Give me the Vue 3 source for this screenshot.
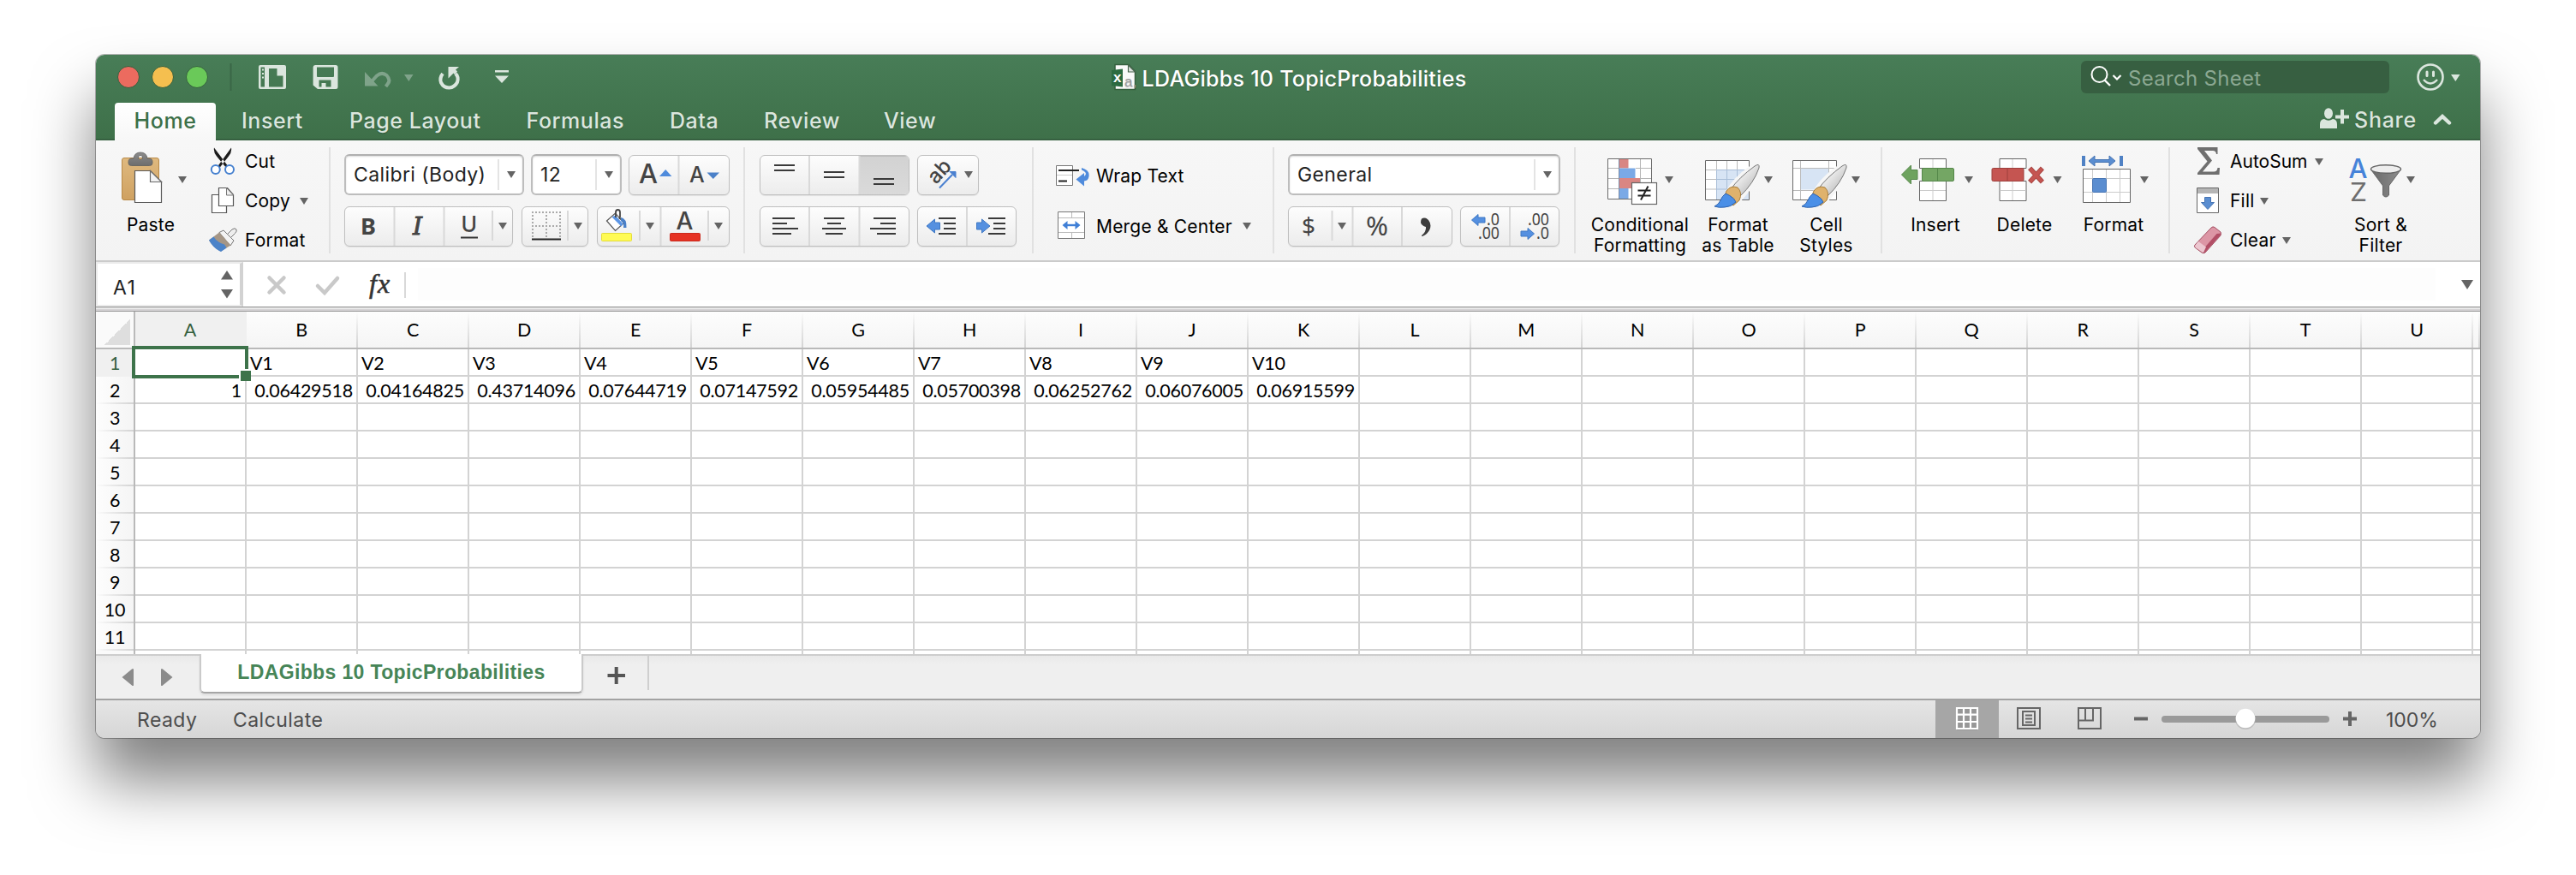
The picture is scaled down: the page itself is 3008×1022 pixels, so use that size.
<script setup>
const tabs = [
  { name: 'Insert', width: 126 },
  { name: 'Page Layout', width: 206.5 },
  { name: 'Formulas', width: 167.5 },
  { name: 'Data', width: 110 },
  { name: 'Review', width: 140 },
  { name: 'View', width: 70 },
]

const columns = 'ABCDEFGHIJKLMNOPQRSTU'.split('')

const values = [
  '1', '0.06429518', '0.04164825', '0.43714096', '0.07644719', '0.07147592',
  '0.05954485', '0.05700398', '0.06252762', '0.06076005', '0.06915599',
]

const sheet = Array.from({ length: 11 }, (_, r) => ({
  number: r + 1,
  cells: columns.map((_, c) => {
    if (r === 0 && c > 0 && c < 11) return { text: 'V' + c, numeric: false }
    if (r === 1 && c < 11) return { text: values[c], numeric: true }
    return { text: '', numeric: false }
  }),
}))
</script>

<template>
  <main class="desktop">
    <div class="window">
      <header class="chrome">
        <div class="titlebar">
          <div class="side">
            <i class="light red"></i><i class="light yellow"></i><i class="light green"></i>
            <svg class="quick" width="364" height="40" viewBox="242 70 364 40">
              <path d="M269.5 74v32" stroke="#3a6747" stroke-width="2" />
              <g fill="#dbe6de">
                <path fill-rule="evenodd" d="M304 76h28q2 0 2 2v24q0 2-2 2h-28q-2 0-2-2v-24q0-2 2-2zM304.500 78.500v23h4.500v-23zM314 80v21.500h16.500v-13h-7v-8.500z" />
                <path d="M325.500 81l5 5.500h-5zM306 80.500h2v2h-2zM306 85h2v2h-2zM306 89.500h2v2h-2z" />
                <path fill-rule="evenodd" d="M368 76h24q2.500 0 2.500 2.500v23q0 2.500-2.500 2.500h-21l-5.400-4.500v-21q0-2.500 2.400-2.500zM370 78.500v10.500q0 1 1 1h18q1 0 1-1v-10.500zM372.500 93.500v8h3v-4.500h5v4.500h6v-8z" />
              </g>
              <path d="M434.500 94.500l5.500-6q6-5 11.500-.5q5.500 6 .5 11l-1.500 2" fill="none" stroke="#7fa38a" stroke-width="4" />
              <path d="M426 84v16.500h15.500z" fill="#7fa38a" />
              <path d="M472 87h10.500l-5.200 8z" fill="#7fa38a" />
              <path d="M517 86q-4 5-2 10.500q3 6 9.500 6q6.500-.5 9.500-6.500q2-6-2-10" fill="none" stroke="#dbe6de" stroke-width="4" />
              <path d="M523.500 78h12.500l-4 3.500l2 2l-3 3.500l-1.500-1.500l-6 6z" fill="#dbe6de" />
              <path d="M578 82h16v2.500h-16zM578 88.500h16l-8 8.500z" fill="#dbe6de" />
            </svg>
          </div>
          <div class="doc-title">
            <svg width="30" height="32" viewBox="1297 74 30 32">
              <path d="M1301 75.500h16l7.500 8v21h-23.500z" fill="#fafafa" stroke="#35603f" stroke-width="1.500" />
              <path d="M1316.500 76v8h8z" fill="#dfe3e0" stroke="#49664f" stroke-width="1.200" />
              <path d="M1297 82l13-1.500v21l-13-1.500z" fill="#2c6b41" />
              <text x="1299" y="96" class="x-mark">x</text>
              <text x="1312" y="101" class="a-mark">a,</text>
            </svg>
            <span>LDAGibbs 10 TopicProbabilities</span>
          </div>
          <div class="side end">
            <div class="search">
              <svg width="46" height="38" viewBox="2436 71 46 38">
                <circle cx="2451.500" cy="87" r="9" fill="none" stroke="#fff" stroke-width="2" />
                <path d="M2457.500 93.500l6.500 6.500" stroke="#fff" stroke-width="2.400" />
                <path d="M2467.500 88l4.500 4.500l4.500-4.500" fill="none" stroke="#fff" stroke-width="2.200" />
              </svg>
              <span>Search Sheet</span>
            </div>
            <svg class="smile" width="52" height="36" viewBox="2821 72 52 36">
              <circle cx="2838" cy="90" r="14.500" fill="none" stroke="#dbe6de" stroke-width="2.600" />
              <path d="M2834 84v4.500M2841.500 84v4.500" stroke="#dbe6de" stroke-width="3" stroke-linecap="round" />
              <path d="M2830 93q8 9 16 0" fill="none" stroke="#dbe6de" stroke-width="2.400" />
              <path d="M2862 87h10.500l-5.200 8z" fill="#dbe6de" />
            </svg>
          </div>
        </div>
        <nav class="tabs">
          <div class="tab active">Home</div>
          <div v-for="t in tabs" :key="t.name" class="tab" :style="{ width: t.width + 'px' }">{{ t.name }}</div>
          <div class="share">
            <svg width="36" height="28" viewBox="2705 126 36 28">
              <ellipse cx="2716" cy="133.500" rx="5" ry="6.300" fill="#dbe6de" />
              <path d="M2706 151v-5q0-5.500 5-6q5 3.500 10 0q5 .5 5 6v5z" fill="#dbe6de" />
              <path d="M2724 137.500h16M2732 129v16.500" stroke="#dbe6de" stroke-width="4" />
            </svg>
            <span>Share</span>
            <svg class="collapse" width="22" height="14" viewBox="2841 132 22 14">
              <path d="M2844 143.500l8-7.500l8 7.500" fill="none" stroke="#dbe6de" stroke-width="4.400" stroke-linecap="round" />
            </svg>
          </div>
        </nav>
      </header>

      <section class="ribbon">
        <div class="group clipboard">
          <div class="big paste">
            <svg width="96" height="86" viewBox="128 164 96 86">
              <defs>
                <linearGradient id="tan" x1="0" y1="0" x2="0" y2="1"><stop offset="0" stop-color="#dfb97f" /><stop offset="1" stop-color="#cfa161" /></linearGradient>
                <linearGradient id="clip" x1="0" y1="0" x2="0" y2="1"><stop offset="0" stop-color="#8b8b8b" /><stop offset="1" stop-color="#6d6d6d" /></linearGradient>
              </defs>
              <rect x="142.500" y="184.500" width="43" height="49" rx="2.500" fill="url(#tan)" stroke="#b98a48" />
              <path fill-rule="evenodd" d="M156 185q1-7 8-7t8 7h1.500q4.500 0 4.500 4v1.500q0 3-3.500 3h-21q-3.500 0-3.500-3v-1.500q0-4 4.500-4zM164 181.500a2.500 2.500 0 1 0 .01 0z" fill="url(#clip)" stroke="#606060" stroke-width=".8" />
              <path d="M157.500 199.500h18l13 13v24h-31z" fill="#fff" stroke="#5a5a5a" stroke-width="1.200" />
              <path d="M175.500 199.500v13h13z" fill="#f2f2f2" stroke="#6a6a6a" stroke-width="1.200" />
              <path d="M208 206h10l-5 8z" fill="#646464" />
            </svg>
            <div>Paste</div>
          </div>
          <div class="lines">
            <div class="line">
              <svg width="45" height="46" viewBox="240 166 45 46">
                <path d="M250 172.500q-1 5 3 10l11.500 14l2-2zM270 172.500q1 5-3 10l-11 14l-2-2z" fill="#1c1c1c" />
                <circle cx="251.800" cy="198" r="5" fill="#fff" stroke="#4580cf" stroke-width="2" />
                <circle cx="268" cy="198" r="5" fill="#fff" stroke="#4580cf" stroke-width="2" />
              </svg>
              <span>Cut</span>
            </div>
            <div class="line">
              <svg width="45" height="46" viewBox="240 212 45 46">
                <path d="M247.500 227.500h17v21h-17z" fill="#fff" stroke="#555" stroke-width="1.200" />
                <path d="M255.500 219.500h10l7 8v13h-17z" fill="#fff" stroke="#555" stroke-width="1.200" />
                <path d="M264.500 219.500v8.500h8z" fill="#f0f0f0" stroke="#777" />
              </svg>
              <span>Copy</span><i class="caret"></i>
            </div>
            <div class="line">
              <svg width="45" height="46" viewBox="240 258 45 46">
                <path d="M262 277l9-9q3.500-2.500 5 0q1 2-1.500 4.500l-9 9z" fill="#eee" stroke="#777" />
                <path d="M256 271.500l5-2.500l12 12l-4 6z" fill="#f3f3f3" stroke="#777" />
                <path d="M256 271.500l13.500 15l-11.500 7q-9-4-14-13z" fill="#a59686" />
                <path d="M244 280.500l5.500-4q3 6 12.500 9l2.500 4l-6.500 4.500q-9-4-14-13.500z" fill="#4b83c9" />
              </svg>
              <span>Format</span>
            </div>
          </div>
        </div>
        <i class="rule"></i>

        <div class="group font">
          <div class="controls">
            <div class="combo w210"><span>Calibri (Body)</span><i class="caret"></i></div>
            <div class="combo w106"><span>12</span><i class="caret"></i></div>
            <div class="buttons">
              <svg width="116" height="45" viewBox="735 182 116 45">
                <path d="M792.500 182v45" class="split" />
                <text x="746" y="213.500" font-size="31" class="glyph">A</text>
                <path d="M770 206l7.200-8l7.200 8z" fill="#4f8bdc" />
                <text x="805" y="213" font-size="25" class="glyph">A</text>
                <path d="M825.500 201.500h14.500l-7.200 7.500z" fill="#4a80c8" />
              </svg>
            </div>
          </div>
          <div class="controls second">
            <div class="buttons">
              <svg width="195" height="45" viewBox="403 242 195 45">
                <path d="M460.500 242v45M518.500 242v45M575 246v35" class="split" />
                <text x="421" y="273.500" font-size="27" font-weight="700" class="noto">B</text>
                <text x="482" y="273.500" font-size="28" class="serif">I</text>
                <text x="538.500" y="271" font-size="25" class="glyph">U</text>
                <path d="M538 277.500h20" stroke="#333" stroke-width="2" />
                <path d="M582 260h10l-5 8z" fill="#646464" />
              </svg>
            </div>
            <div class="buttons">
              <svg width="76" height="45" viewBox="610 242 76 45">
                <path d="M663 246v35" class="split" />
                <path d="M621 248h34M621 264h34M622 247v32M638 247v32M654 247v32" stroke="#aaa" stroke-width="2" stroke-dasharray="2 2" />
                <path d="M621 279.500h34" stroke="#222" stroke-width="2" />
                <path d="M670 260h10l-5 8z" fill="#646464" />
              </svg>
            </div>
            <div class="buttons">
              <svg width="153" height="45" viewBox="698 242 153 45">
                <path d="M747 246v35M771.500 242v45M827 246v35" class="split" />
                <path d="M708.500 258l10-9l10 11.500l-10 9z" fill="#fff" stroke="#555" stroke-width="1.200" />
                <path d="M714.500 253.500l11 11l2-3l-9-10z" fill="#5c96e6" />
                <path d="M719 254v-6q0-3 2.500-3t2.500 3v5l-.5 3" fill="none" stroke="#444" stroke-width="1.800" />
                <path d="M725 254q7 1 6.500 12h-3.500q1-6-3-8z" fill="#4a80c8" />
                <rect x="702.500" y="272.500" width="35" height="9" rx="1" fill="#fffb54" stroke="#e3dc3c" />
                <path d="M754 260h10l-5 8z" fill="#646464" />
                <text x="789.500" y="268" font-size="28" class="glyph">A</text>
                <rect x="782.500" y="272.500" width="35" height="9" rx="1" fill="#e63223" stroke="#c92a1e" />
                <path d="M834 260h10l-5 8z" fill="#646464" />
              </svg>
            </div>
          </div>
        </div>
        <i class="rule"></i>

        <div class="group align">
          <div class="controls">
            <div class="buttons">
              <svg width="173" height="45" viewBox="888 182 173 45">
                <defs><linearGradient id="pressed" x1="0" y1="0" x2="0" y2="1"><stop offset="0" stop-color="#d2d2d2" /><stop offset="1" stop-color="#dadada" /></linearGradient></defs>
                <rect x="1004" y="181" width="58" height="47" fill="url(#pressed)" />
                <path d="M1004 182.500h57" stroke="#bdbdbd" />
                <path d="M945 182v45M1003.500 182v45" class="split" />
                <path d="M904 193h24M904 199h24M962 201h24M962 207h24M1020 209h24M1020 215h24" class="bar" />
              </svg>
            </div>
            <div class="buttons">
              <svg width="70" height="45" viewBox="1072 182 70 45">
                <text x="0" y="0" transform="translate(1093 216) rotate(-47)" font-size="24" class="glyph">ab</text>
                <path d="M1097 219.500l15-15.500" stroke="#4a80d0" stroke-width="2" />
                <path d="M1109 200.500h7v7z" fill="#4a80d0" stroke="#4a80d0" />
                <path d="M1126 200h10l-5 8z" fill="#646464" />
              </svg>
            </div>
          </div>
          <div class="controls second">
            <div class="buttons">
              <svg width="173" height="45" viewBox="888 242 173 45">
                <path d="M945 242v45M1003.500 242v45" class="split" />
                <path d="M902 255h26M902 261h17M902 267h30M902 273h22M962 255h24M966 261h16M960 267h28M964 273h20M1020 255h26M1028 261h18M1016 267h30M1024 273h22" class="bar" />
              </svg>
            </div>
            <div class="buttons">
              <svg width="114" height="45" viewBox="1072 242 114 45">
                <path d="M1129 242v45" class="split" />
                <path d="M1096 255h20M1102 261h14M1102 267h14M1096 273h20M1154 255h20M1160 261h14M1160 267h14M1154 273h20" class="bar" />
                <path d="M1082 264l9.500-8v4h6v8h-6v4zM1156 264l-9.500-8v4h-6v8h6v4z" fill="#5590e0" stroke="#3f78c4" />
              </svg>
            </div>
          </div>
        </div>
        <i class="rule"></i>

        <div class="group wrap">
          <div class="line">
            <svg width="46" height="48" viewBox="1233 181 46 48">
              <path d="M1233.500 193.500h19v23h-19z" fill="#fff" stroke="#777" />
              <path d="M1234 204.500h18" stroke="#ccc" />
              <path d="M1236 199h24M1236 211.500h10" stroke="#222" stroke-width="2" />
              <path d="M1263 196q11 3 8 12q-1 3-5 3.500v6l-9.500-8l9.500-7.500v4q5-4-3-7.500z" fill="#4f8bdc" />
            </svg>
            <span>Wrap Text</span>
          </div>
          <div class="line">
            <svg width="46" height="48" viewBox="1233 240 46 48">
              <path d="M1235.500 247.500h31v31h-31z" fill="#fff" stroke="#777" />
              <path d="M1236 254.500h30M1236 271.500h30M1251.500 248v6.500M1251.500 271.500v6.500" stroke="#bbb" />
              <path d="M1244 263h14" stroke="#3f7fd6" stroke-width="2.400" />
              <path d="M1246.500 258v10l-6-5zM1255.500 258v10l6-5z" fill="#3f7fd6" />
            </svg>
            <span>Merge &amp; Center</span><i class="caret"></i>
          </div>
        </div>
        <i class="rule"></i>

        <div class="group number">
          <div class="controls">
            <div class="combo w318"><span>General</span><i class="caret"></i></div>
          </div>
          <div class="controls second">
            <div class="buttons">
              <svg width="190" height="45" viewBox="1505 242 190 45">
                <path d="M1555.500 246v35M1579.500 242v45M1637 242v45" class="split" />
                <text x="1520" y="273.500" font-size="28" class="noto">$</text>
                <path d="M1562 260h10l-5 8z" fill="#646464" />
                <text x="1595" y="274.500" font-size="30" class="noto" textLength="26" lengthAdjust="spacingAndGlyphs">%</text>
                <path d="M1660 255.500q4-2.500 8 1.500q4 5 1.500 11q-2 5-8.500 8q-1.500 0-.5-1.500q5-4 4.500-9.500q-5-1.500-6-5q0-3 1-4.500z" fill="#3c3c3c" />
              </svg>
            </div>
            <div class="buttons">
              <svg width="114" height="45" viewBox="1706 242 114 45">
                <path d="M1763 242v45" class="split" />
                <path d="M1718.500 257l7.500-6.500v3.500h8v6h-8v3.500zM1791.500 273l-7.500-6.500v3.500h-8v6h8v3.500z" fill="#5590e0" stroke="#3f78c4" />
                <g font-size="19" class="noto">
                  <text x="1736" y="262.500" textLength="15" lengthAdjust="spacingAndGlyphs">.0</text>
                  <text x="1726" y="278.500" textLength="25" lengthAdjust="spacingAndGlyphs">.00</text>
                  <text x="1784" y="262.500" textLength="25" lengthAdjust="spacingAndGlyphs">.00</text>
                  <text x="1794" y="278.500" textLength="15" lengthAdjust="spacingAndGlyphs">.0</text>
                </g>
              </svg>
            </div>
          </div>
        </div>
        <i class="rule"></i>

        <div class="group styles">
          <div class="big w120">
            <svg width="120" height="86" viewBox="1855 164 120 86">
              <path d="M1877.500 185.500h51v47h-51z" fill="#fff" />
              <path d="M1890.500 186h11v10.500h-11zM1890.500 208h25v12h-25z" fill="#d98683" />
              <path d="M1890.500 196.500h19v11.500h-19zM1890.500 220h11v12h-11z" fill="#7aa9e6" />
              <path d="M1878 196.500h12M1910 196.500h18M1878 208.500h12M1916 208.500h12M1878 220.500h12M1915.500 186v47" stroke="#b5b5b5" />
              <path d="M1890.500 186v47" stroke="#7d8ea8" />
              <path d="M1877.500 185.500h51v47h-51z" fill="none" stroke="#6a6a6a" />
              <rect x="1905.500" y="213.500" width="29" height="25" fill="#fff" stroke="#666" stroke-width="1.200" />
              <path d="M1912.500 222.500h15M1912.500 228.500h15M1924.500 217.500l-8.500 16" stroke="#222" stroke-width="2" />
              <path d="M1944 206h10l-5 8z" fill="#646464" />
            </svg>
            <div>Conditional<br>Formatting</div>
          </div>
          <div class="big w105">
            <svg width="105" height="86" viewBox="1977 164 105 86">
              <defs>
                <linearGradient id="handle" x1="0" y1="0" x2="1" y2="1"><stop offset="0.2" stop-color="#ffffff" /><stop offset="1" stop-color="#a8a8a8" /></linearGradient>
                <g id="brush">
                  <path d="M20 41q8-22 36-39q7-3 6 4q-10 24-29 42z" fill="#f6f6f6" stroke="#f6f6f6" stroke-width="4" />
                  <path d="M27 31q10-14 28-27q6-4 5 2q-6 18-22 33z" fill="url(#handle)" stroke="#777" />
                  <path d="M22 33q5-7 13-4q6 6 2 15l-7 6l-11-9z" fill="#dfb26c" stroke="#a87e3c" />
                  <path d="M21 36q5 2 9.500 6l2.500 4q-6 6-13 6q-7 1-12-1q5-2 7-7q2-5 6-8z" fill="#4a8fe7" stroke="#2e62ad" />
                </g>
              </defs>
              <path d="M1991.500 187.500h51v46h-51z" fill="#fff" />
              <path d="M2004.500 198.500h38v35h-38z" fill="#d7e4f4" />
              <path d="M1992 198.500h12M1992 209.500h12M1992 221h12M2004.500 188v10M2016.500 188v10M2028.500 188v10" stroke="#bbb" />
              <path d="M2004.500 233v-34.500h38M2004 209.500h38M2004 221h38M2016.500 198v35M2028.500 198v35" stroke="#a9bed8" fill="none" />
              <path d="M1991.500 187.500h51v46h-51z" fill="none" stroke="#6a6a6a" />
              <use href="#brush" x="1993" y="188" transform="translate(1 2)" />
              <path d="M2060 206h10l-5 8z" fill="#646464" />
            </svg>
            <div>Format<br>as Table</div>
          </div>
          <div class="big w97">
            <svg width="97" height="86" viewBox="2084 164 97 86">
              <path d="M2093.500 187.500h51v46h-51z" fill="#fff" />
              <path d="M2102.500 196.500h33v25h-33z" fill="#d7e4f4" />
              <path d="M2094 196.500h50M2094 222.500h50M2102.500 188v45M2135.500 188v45" stroke="#bbb" />
              <path d="M2093.500 187.500h51v46h-51z" fill="none" stroke="#6a6a6a" />
              <use href="#brush" x="2095" y="188" transform="translate(1 2)" />
              <path d="M2162 206h10l-5 8z" fill="#646464" />
            </svg>
            <div>Cell<br>Styles</div>
          </div>
        </div>
        <i class="rule"></i>

        <div class="group cells">
          <div class="big w104">
            <svg width="104" height="86" viewBox="2208 164 104 86">
              <path d="M2241.500 185.500h31v11h-31zM2241.500 211.500h31v23h-31z" fill="#fff" stroke="#666" />
              <path d="M2257 186v10M2257 212v22M2242 222.500h30" stroke="#ccc" />
              <path d="M2220.500 204l11-11v5.500h7.500v11h-7.500v5.500z" fill="#6ea35f" stroke="#55884a" />
              <rect x="2244.500" y="196.500" width="37" height="15" rx="1.500" fill="#74a664" stroke="#55884a" />
              <path d="M2262.500 197v14" stroke="#55884a" />
              <path d="M2294 206h10l-5 8z" fill="#646464" />
            </svg>
            <div>Insert</div>
          </div>
          <div class="big w104">
            <svg width="104" height="86" viewBox="2312.500 164 104 86">
              <path d="M2335.500 185.500h31v11h-31zM2335.500 211.500h31v23h-31z" fill="#fff" stroke="#666" />
              <path d="M2350.500 186v10M2350.500 212v22M2336 222.500h30" stroke="#ccc" />
              <rect x="2326.500" y="196.500" width="37" height="15" rx="1.500" fill="#c55551" stroke="#9e403d" />
              <path d="M2344.500 197v14" stroke="#9e403d" />
              <path d="M2372.500 198.500l11 12M2383.500 198.500l-11 12" stroke="#a84441" stroke-width="5.600" stroke-linecap="square" />
              <path d="M2372.500 198.500l11 12M2383.500 198.500l-11 12" stroke="#c55551" stroke-width="4" stroke-linecap="square" />
              <path d="M2398 206h10l-5 8z" fill="#646464" />
            </svg>
            <div>Delete</div>
          </div>
          <div class="big w104">
            <svg width="104" height="86" viewBox="2415 164 104 86">
              <path d="M2432 182v12M2476 182v12" stroke="#4f81c4" stroke-width="4" />
              <path d="M2438 188l7-6v4.500h17v-4.500l7 6l-7 6v-4.500h-17v4.500z" fill="#5a8dd0" stroke="#4674b3" />
              <path d="M2431.500 197.500h55v39h-55z" fill="#fff" stroke="#666" />
              <path d="M2442.500 198v38M2458.500 198v38M2474.500 198v38M2432 208.500h54M2432 224.500h54" stroke="#ccc" />
              <rect x="2442.500" y="208.500" width="16" height="16" rx="1" fill="#5a8dd0" stroke="#4674b3" />
              <path d="M2498 206h10l-5 8z" fill="#646464" />
            </svg>
            <div>Format</div>
          </div>
        </div>
        <i class="rule"></i>

        <div class="group editing">
          <div class="lines">
            <div class="line sum">
              <svg width="45" height="46" viewBox="2558 166 45 46">
                <path d="M2566 172h23.500v8h-1.500q-.5-4-4-4h-10l9 11.500l-11 13h13q4 0 4.500-4.500h2.500l-.5 8h-25.500v-2l11.500-13.500l-11.500-14.500z" fill="#6f6f6f" />
              </svg>
              <span>AutoSum</span><i class="caret"></i>
            </div>
            <div class="line fill">
              <svg width="45" height="46" viewBox="2558 212 45 46">
                <path d="M2565.500 219.500h25v29h-25z" fill="#fff" stroke="#666" />
                <path d="M2566 220h24v6h-24z" fill="#b5b5b5" />
                <path d="M2574.500 230.500h7v6h4l-7.500 8l-7.500-8h4z" fill="#5a8dd0" stroke="#4674b3" />
              </svg>
              <span>Fill</span><i class="caret"></i>
            </div>
            <div class="line clear">
              <svg width="45" height="46" viewBox="2558 258 45 46">
                <path d="M2563 286l19-20q2-2 4-.500l7 5.500q1 1.500 0 4l-18 20q-2 1.500-4 0l-8-6q-1-1 0-3z" fill="#dc96a5" stroke="#a34f62" />
                <path d="M2593 272.500q0 2-1 3l-17 19q-1.500 1-3 .5l2.500-6l14-16z" fill="#b24e66" />
                <path d="M2563 287l4-5l9 6.500l-3 6.500q-1 0-2-1l-7.500-5z" fill="#ecc7d0" />
              </svg>
              <span>Clear</span><i class="caret"></i>
            </div>
          </div>
          <div class="big w96">
            <svg width="96" height="86" viewBox="2732 164 96 86">
              <defs><linearGradient id="funnel" x1="0" x2="1" y1="0" y2="0"><stop offset="0" stop-color="#6a6a6a" /><stop offset="1" stop-color="#8d8d8d" /></linearGradient></defs>
              <text x="2742.500" y="208" font-size="31" font-weight="500" fill="#4683d9" class="sans">A</text>
              <text x="2744" y="234.500" font-size="30" fill="#6d6d6d" class="sans" textLength="20" lengthAdjust="spacingAndGlyphs">Z</text>
              <path d="M2768.500 198l14 19v11q3.500 4 7 0v-11l14-19z" fill="url(#funnel)" stroke="#666" />
              <ellipse cx="2786" cy="197.500" rx="17.500" ry="4.800" fill="#ededed" stroke="#666" stroke-width="1.400" />
              <path d="M2810 206h10l-5 8z" fill="#646464" />
            </svg>
            <div>Sort &amp;<br>Filter</div>
          </div>
        </div>
      </section>

      <section class="formula">
        <div class="namebox">
          <span>A1</span>
          <svg width="14" height="34" viewBox="258 315 14 34"><path d="M258 326.500h14l-7-10.500zM258 338h14l-7 10.500z" fill="#646464" /></svg>
        </div>
        <svg width="190" height="52" viewBox="284 306 190 52">
          <path d="M314.500 324.500l17 17M331.500 324.500l-17 17M371 334l8 8l15-17" fill="none" stroke="#c9c9c9" stroke-width="4.500" stroke-linecap="round" />
          <text x="431" y="341.500" class="fx">fx</text>
          <path d="M473 318v30" stroke="#d9d9d9" stroke-width="2" />
        </svg>
        <div class="entry"></div>
        <svg width="14" height="12" viewBox="2874 326 14 12"><path d="M2874 327h14l-7 11z" fill="#646464" /></svg>
      </section>
      <div class="band"></div>

      <section class="grid">
        <div class="row head">
          <div class="corner"></div>
          <div v-for="(c, i) in columns" :key="c" class="col" :class="{ on: i === 0 }">{{ c }}</div>
          <div class="col rest"></div>
        </div>
        <div v-for="r in sheet" :key="r.number" class="row">
          <div class="num" :class="{ on: r.number === 1 }">{{ r.number }}</div>
          <div v-for="(c, i) in r.cells" :key="i" class="cell" :class="{ numeric: c.numeric }">{{ c.text }}</div>
          <div class="cell rest"></div>
        </div>
        <div class="row last">
          <div class="num"></div>
          <div v-for="c in columns" :key="c" class="cell"></div>
          <div class="cell rest"></div>
        </div>
        <div class="selection"><i></i></div>
      </section>

      <footer class="sheets">
        <svg class="nav" width="60" height="22" viewBox="142 780 60 22"><path d="M156 781.500v19q-1 1-2 0l-11.500-9.500l11.500-9.500q1-1 2 0zM188 781.500v19q1 1 2 0l11.500-9.500l-11.500-9.500q-1-1-2 0z" fill="#8b8b8b" /></svg>
        <div class="sheet-tab">LDAGibbs 10 TopicProbabilities</div>
        <svg class="add" width="77" height="50" viewBox="681 766 77 50">
          <path d="M709.500 789h20.500M719.700 779v20" stroke="#555" stroke-width="4" />
          <path d="M757 766v40" stroke="#cfcfcf" stroke-width="2" />
        </svg>
      </footer>
      <footer class="status">
        <span class="ready">Ready</span><span>Calculate</span>
        <div class="view-on">
          <svg width="28" height="30" viewBox="2283 825 28 30">
            <path d="M2285 828h24v25h-24z" fill="#8d8d8d" opacity=".6" />
            <path d="M2285 827h24v24h-24zM2293 827v24M2301 827v24M2285 834.700h24M2285 843h24" fill="none" stroke="#fff" stroke-width="2.200" />
          </svg>
        </div>
        <svg width="426" height="44" viewBox="2334 818 426 44">
          <g fill="none" stroke="#666" stroke-width="2">
            <path d="M2356 827h26v24h-26zM2362 831h14v16h-14zM2365 835.500h8M2365 839.500h8M2365 843.500h8" />
            <path d="M2427 827h26v24h-26zM2427 841.500h17v-14.500M2435 827v14.500" />
          </g>
          <path d="M2492 839.500h16" stroke="#666" stroke-width="4" />
          <rect x="2524" y="836" width="196" height="8" rx="4" fill="#9a9a9a" />
          <circle cx="2622" cy="840" r="12" fill="#aaa" opacity=".6" />
          <circle cx="2622" cy="839" r="11.300" fill="#fff" />
          <path d="M2736 839.500h16M2744 831v17" stroke="#666" stroke-width="4" />
        </svg>
        <span class="zoom">100%</span>
      </footer>
    </div>
  </main>
</template>

<style>
body { margin: 0; background: #fff; }
</style>

<style scoped>
* { box-sizing: border-box; }
.desktop {
  width: 3008px;
  height: 1022px;
  padding: 64px 112px;
  overflow: hidden;
  background: #fff;
  font-family: Inter, "Liberation Sans", sans-serif;
}
.window {
  width: 2784px;
  height: 798px;
  border-radius: 10px;
  box-shadow: 0 0 0 1px rgba(0, 0, 0, .28), 0 50px 72px rgba(0, 0, 0, .5);
}
svg { display: block; flex: none; }

.chrome {
  height: 100px;
  border-radius: 10px 10px 0 0;
  background: linear-gradient(#487d57, #3e7049);
  box-shadow: inset 0 -2px #376141;
}
.titlebar { height: 56px; display: flex; align-items: center; padding-bottom: 4px; }
.side { flex: 1; display: flex; align-items: center; padding-left: 25px; }
.side.end { justify-content: flex-end; padding: 0 23px 0 0; }
.light { width: 26px; height: 26px; border-radius: 50%; border: 1px solid #35603f; margin-right: 14px; }
.red { background: #ec6b5f; }
.yellow { background: #f5bf4f; }
.green { background: #6ac959; }
.quick { margin-left: -15px; }
.doc-title { display: flex; align-items: center; gap: 6px; color: #fff; font-size: 25px; font-weight: 500; letter-spacing: .28px; text-shadow: 0 1px 1px rgba(0, 0, 0, .25); }
.doc-title span { padding-top: 3px; }
.x-mark { font: 700 17px "Liberation Sans", sans-serif; fill: #fff; }
.a-mark { font: 17px "Liberation Sans", sans-serif; fill: #999; }
.search { width: 360px; height: 38px; border-radius: 6px; background: #375f41; display: flex; align-items: center; padding-left: 6px; color: #8ba892; font-size: 24px; letter-spacing: .3px; }
.search span { padding: 2px 0 0 3px; }
.smile { margin-left: 31px; }

.tabs { height: 44px; display: flex; padding: 0 33px 0 22px; font-size: 25px; font-weight: 500; letter-spacing: .55px; line-height: 42px; color: #dbe6de; text-shadow: 0 1px 1px rgba(0, 0, 0, .25); }
.tab { white-space: nowrap; }
.tab.active { width: 118px; margin-right: 30px; text-align: center; border-radius: 4px 4px 0 0; background: linear-gradient(#fff, #f7f7f7); color: #3b7048; text-shadow: none; }
.share { margin-left: auto; display: flex; align-items: center; gap: 5px; padding-bottom: 6px; letter-spacing: .75px; }
.share > span { padding-top: 2px; }
.collapse { margin-left: 14px; }

.ribbon { height: 142px; display: flex; background: linear-gradient(#f7f7f7, #f3f3f3); border-bottom: 2px solid #cbcbcb; font-size: 21px; letter-spacing: .2px; color: #000; }
.rule { flex: none; width: 2px; height: 124px; margin-top: 8px; background: #e1e1e1; }
.group { flex: none; display: flex; }
.clipboard { width: 272px; padding-left: 16px; }
.font { width: 482px; padding-left: 16px; }
.align { width: 335px; padding-left: 17px; }
.wrap { width: 279px; padding: 17px 0 0 26px; flex-direction: column; gap: 11px; }
.number { width: 350px; padding-left: 16px; }
.styles { width: 356px; padding-left: 15px; gap: 2px; }
.cells { width: 334px; padding-left: 10px; }
.editing { width: 362px; padding-left: 24px; }
.font, .align, .number { flex-direction: column; padding-top: 16px; }

.big { text-align: center; line-height: 24px; display: flex; flex-direction: column; align-items: center; }
.big > div { padding-top: 1px; }
.paste { width: 96px; }
.w120 { width: 120px; }
.w105 { width: 105px; }
.w97 { width: 97px; }
.w104 { width: 104px; }
.w96 { width: 96px; margin-left: 14px; }
.lines { padding: 2px 0 0 16px; width: 160px; }
.editing .lines { padding-left: 0; }
.line { height: 46px; display: flex; align-items: center; white-space: nowrap; }
.wrap .line { height: 48px; }
.line > span { padding: 0 0 1px 1px; }
.wrap .line > span { padding: 0 0 0 1px; }
.caret { flex: none; border: 5px solid transparent; border-top: 8px solid #646464; border-bottom: 0; margin-left: 11px; }
.wrap .caret { margin-left: 12px; }
.fill .caret, .clear .caret { margin-left: 7px; }
.sum .caret { margin-left: 9px; }
.sum span { letter-spacing: 0; }

.controls { height: 48px; display: flex; }
.controls.second { height: 47px; margin-top: 13px; gap: 9px; }
.font .controls.second { gap: 10px; }
.align .controls { gap: 9px; }
.combo { height: 48px; border: 2px solid #bdbdbd; border-top-color: #b0b0b0; border-radius: 6px; background: #fff; box-shadow: inset 0 1px 2px rgba(0, 0, 0, .15); display: flex; align-items: center; justify-content: space-between; padding: 0 8px 0 9px; font-size: 23px; letter-spacing: .4px; color: #222; margin-right: 8px; }
.combo .caret { position: relative; }
.combo .caret::before { content: ""; position: absolute; left: -16px; top: -22px; width: 2px; height: 36px; background: #e4e4e4; }
.w210 { width: 210px; }
.w106 { width: 106px; }
.w318 { width: 318px; margin-right: 0; }
.buttons { height: 47px; margin-top: 1px; border: 1px solid #bfbfbf; border-radius: 6px; background: linear-gradient(#fdfdfd, #ececec); overflow: hidden; box-shadow: 0 1px 1px rgba(0, 0, 0, .08); }
.second .buttons { margin-top: 0; }
.split { stroke: #d9d9d9; stroke-width: 2; }
.bar { stroke: #3a3a3a; stroke-width: 2; }
.glyph { font-family: Inter, sans-serif; font-weight: 500; fill: #444; letter-spacing: 0; }
.sans { font-family: Inter, sans-serif; letter-spacing: 0; }
.noto { font-family: "Noto Sans", sans-serif; fill: #444; letter-spacing: 0; }
.serif { font-family: "DejaVu Serif", serif; font-style: italic; fill: #444; stroke: #444; stroke-width: 1; }

.formula { height: 52px; display: flex; align-items: center; background: #fff; }
.namebox { width: 172px; height: 52px; display: flex; align-items: center; justify-content: space-between; padding: 0 8px 0 18px; border: 2px solid #ebebeb; border-width: 2px 4px 2px 2px; border-right-color: #d2d2d2; font-size: 23px; letter-spacing: 1.4px; color: #222; }
.namebox span { padding-top: 7px; }
.fx { font: italic 32px "Liberation Serif", serif; fill: #333; stroke: #333; stroke-width: .6; letter-spacing: 1px; }
.entry { flex: 1; margin: 0 30px 0 14px; height: 38px; background: #fdfdfd; }
.formula > svg:last-child { margin-right: 8px; }
.band { height: 6px; background: linear-gradient(#9b9b9b 0 1px, #d8d8d8 1px 2px, #ededed 2px 3px, #d6d4d6 3px 5px, #989898 5px 6px); }

.grid { position: relative; height: 400px; overflow: hidden; background: #fff; font-family: Lato, sans-serif; font-size: 21.5px; letter-spacing: -.25px; color: #000; }
.row { display: flex; height: 32px; }
.head { height: 44px; }
.corner { flex: none; width: 46px; background: linear-gradient(135deg, transparent 50%, #dedede 50%) 10px 9px / 30px 30px no-repeat, #fafafa; border: solid #bababa; border-width: 0 2px 2px 0; }
.col { flex: none; width: 130px; padding-right: 2px; line-height: 43px; text-align: center; border-bottom: 2px solid #b9b9b9; background: linear-gradient(#fdfdfd00, #d4d4d4) right / 2px 100% no-repeat, linear-gradient(#fdfdfd, #f5f5f5); }
.col.on { background: #f0f0f0; }
.on { color: #35603f; }
.rest.rest { width: 8px; border-right: 0; padding: 0; }
.num { flex: none; width: 46px; line-height: 32px; text-align: center; border-right: 2px solid #b9b9b9; background: linear-gradient(90deg, #fff0, #d4d4d4) bottom / 100% 2px no-repeat, linear-gradient(90deg, #fdfdfd, #f5f5f5); }
.num.on { background: #f0f0f0; }
.cell { flex: none; width: 130px; line-height: 32px; padding: 0 4px; border: solid #d3d3d3; border-width: 0 2px 2px 0; }
.cell.numeric { text-align: right; }
.last { height: 4px; }
.last .cell { border-bottom: 0; }
.last .num { background: #fafafa; }
.selection { position: absolute; left: 42px; top: 40px; width: 136px; height: 38px; border: 4px solid #3d734a; }
.selection i { position: absolute; right: -7px; bottom: -7px; width: 14px; height: 14px; background: #3d734a; border: solid #fff; border-width: 2px 0 0 2px; }

.sheets { height: 54px; display: flex; background: linear-gradient(#cdcdcd 2px, #e9e9e9 2px, #efefef 12px); border-bottom: 2px solid #a2a2a2; }
.nav { margin: 16px 31px 0 30px; }
.sheet-tab { width: 448px; height: 46px; border: 2px solid #cacaca; border-top: 0; border-bottom-color: #a6a6a6; border-radius: 0 0 6px 6px; background: #fff; text-align: center; font: 700 23px/43px "Liberation Sans", sans-serif; letter-spacing: .36px; color: #468557; box-shadow: 0 2px 3px rgba(0, 0, 0, .08); }
.add { margin-top: 2px; }
.status { height: 44px; display: flex; align-items: center; border-radius: 0 0 10px 10px; background: linear-gradient(#e5e5e5, #d6d6d6); font-size: 23px; letter-spacing: .45px; color: #4d4d4d; }
.status > span { padding-top: 1px; }
.status .ready { width: 160px; padding-left: 48px; }
.view-on { width: 74px; height: 44px; margin-left: auto; background: #a6a6a6; display: flex; align-items: center; justify-content: center; }
.status .zoom { width: 136px; padding-left: 26px; letter-spacing: 0; }
</style>
